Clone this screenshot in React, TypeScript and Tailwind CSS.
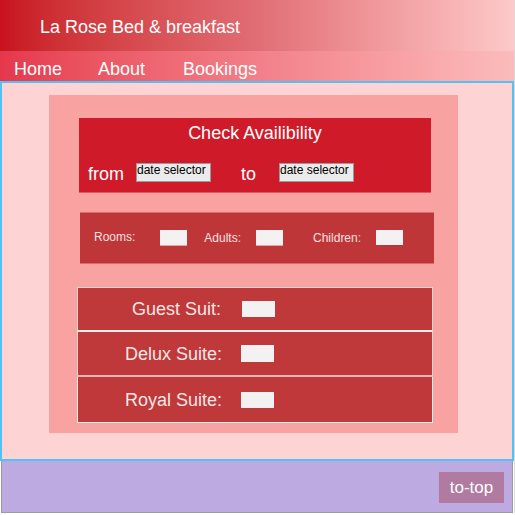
export default function App() {
  const font = { fontFamily: '"Liberation Sans", Arial, sans-serif' }

  return (
    <div className="w-[515px] bg-white border-r border-[#d9d9d9]" style={font}>
      {/* header */}
      <div className="h-[51px] flex items-center pl-[40px] pt-[2px] bg-gradient-to-r from-[#c8111f] via-[#e16d75] to-[#fdc9c9]">
        <h1 className="text-[18px] text-white leading-none">La Rose Bed &amp; breakfast</h1>
      </div>

      {/* nav */}
      <nav className="h-[30px] flex items-center pt-[5px] bg-gradient-to-r from-[#e5374c] via-[#f27f89] to-[#fbbcbc] text-white text-[18px] leading-none">
        <a className="ml-[14px]">Home</a>
        <a className="ml-[36px]">About</a>
        <a className="ml-[38px]">Bookings</a>
      </nav>

      {/* main */}
      <main className="h-[380px] border-2 border-[#4fc3f7] bg-[#fed3d3] pt-[12px] pl-[47px]">
        <div className="w-[409px] h-[338px] bg-[#f9a2a2] pt-[23px] flex flex-col">
          {/* check availability */}
          <div className="ml-[30px] w-[352px] h-[75px] bg-[#cf1b29] border-b border-[#e8555f] flex flex-col text-white">
            <p className="text-[18px] text-center leading-none mt-[6px]">Check Availibility</p>
            <div className="flex items-center mt-[20px] pl-[9px]">
              <span className="text-[18px] leading-none mt-[3px]">from</span>
              <div className="ml-[12px] w-[75px] h-[19px] bg-[#ebebeb] border border-[#9a9a9a] text-black text-[12px] leading-none">
                date selector
              </div>
              <span className="ml-[30px] text-[18px] leading-none mt-[3px]">to</span>
              <div className="ml-[23px] w-[75px] h-[19px] bg-[#ebebeb] border border-[#9a9a9a] text-black text-[12px] leading-none">
                date selector
              </div>
            </div>
          </div>

          {/* guests */}
          <div className="ml-[31px] mt-[19px] w-[354px] h-[52px] bg-[#bf3639] border-y border-[#dc6a6c] flex items-center text-[12px] text-[#f6e0e0] leading-none">
            <span className="ml-[14px] -mt-[3px]">Rooms:</span>
            <div className="ml-[25px] w-[27px] h-[16px] bg-[#f3f1f1] border-b border-[#e6a4a4]" />
            <span className="ml-[17px]">Adults:</span>
            <div className="ml-[15px] w-[27px] h-[16px] bg-[#f3f1f1] border-b border-[#e6a4a4]" />
            <span className="ml-[30px]">Children:</span>
            <div className="ml-[15px] w-[27px] h-[15px] -mt-[2px] bg-[#f3f1f1]" />
          </div>

          {/* suites */}
          <div className="ml-[28px] mt-[23px] w-[356px] flex flex-col text-[18px] text-[#f6e6e6] leading-none">
            <div className="h-[45px] bg-[#bf393a] border border-[#e0d6d6] border-b-2 border-b-[#f0eeee] flex items-center">
              <span className="w-[143px] text-right">Guest Suit:</span>
              <div className="ml-[21px] w-[33px] h-[16px] bg-[#f3f1f1]" />
            </div>
            <div className="h-[45px] bg-[#bf393a] border-x border-[#e0d6d6] border-b-2 border-b-[#e4b8b8] flex items-center">
              <span className="w-[144px] text-right">Delux Suite:</span>
              <div className="ml-[19px] w-[33px] h-[17px] bg-[#f3f1f1]" />
            </div>
            <div className="h-[46px] bg-[#bf393a] border border-t-0 border-[#f0eeee] flex items-center">
              <span className="w-[144px] text-right">Royal Suite:</span>
              <div className="ml-[19px] w-[33px] h-[16px] bg-[#f3f1f1]" />
            </div>
          </div>
        </div>
      </main>

      {/* footer */}
      <footer className="h-[52px] mx-px border border-t-0 border-[#9b9b9b] bg-[#bdaae0] flex justify-end pt-[11px] pr-[8px]">
        <button className="w-[65px] h-[31px] bg-[#b07aa1] text-white text-[17px] leading-none">to-top</button>
      </footer>
    </div>
  )
}
